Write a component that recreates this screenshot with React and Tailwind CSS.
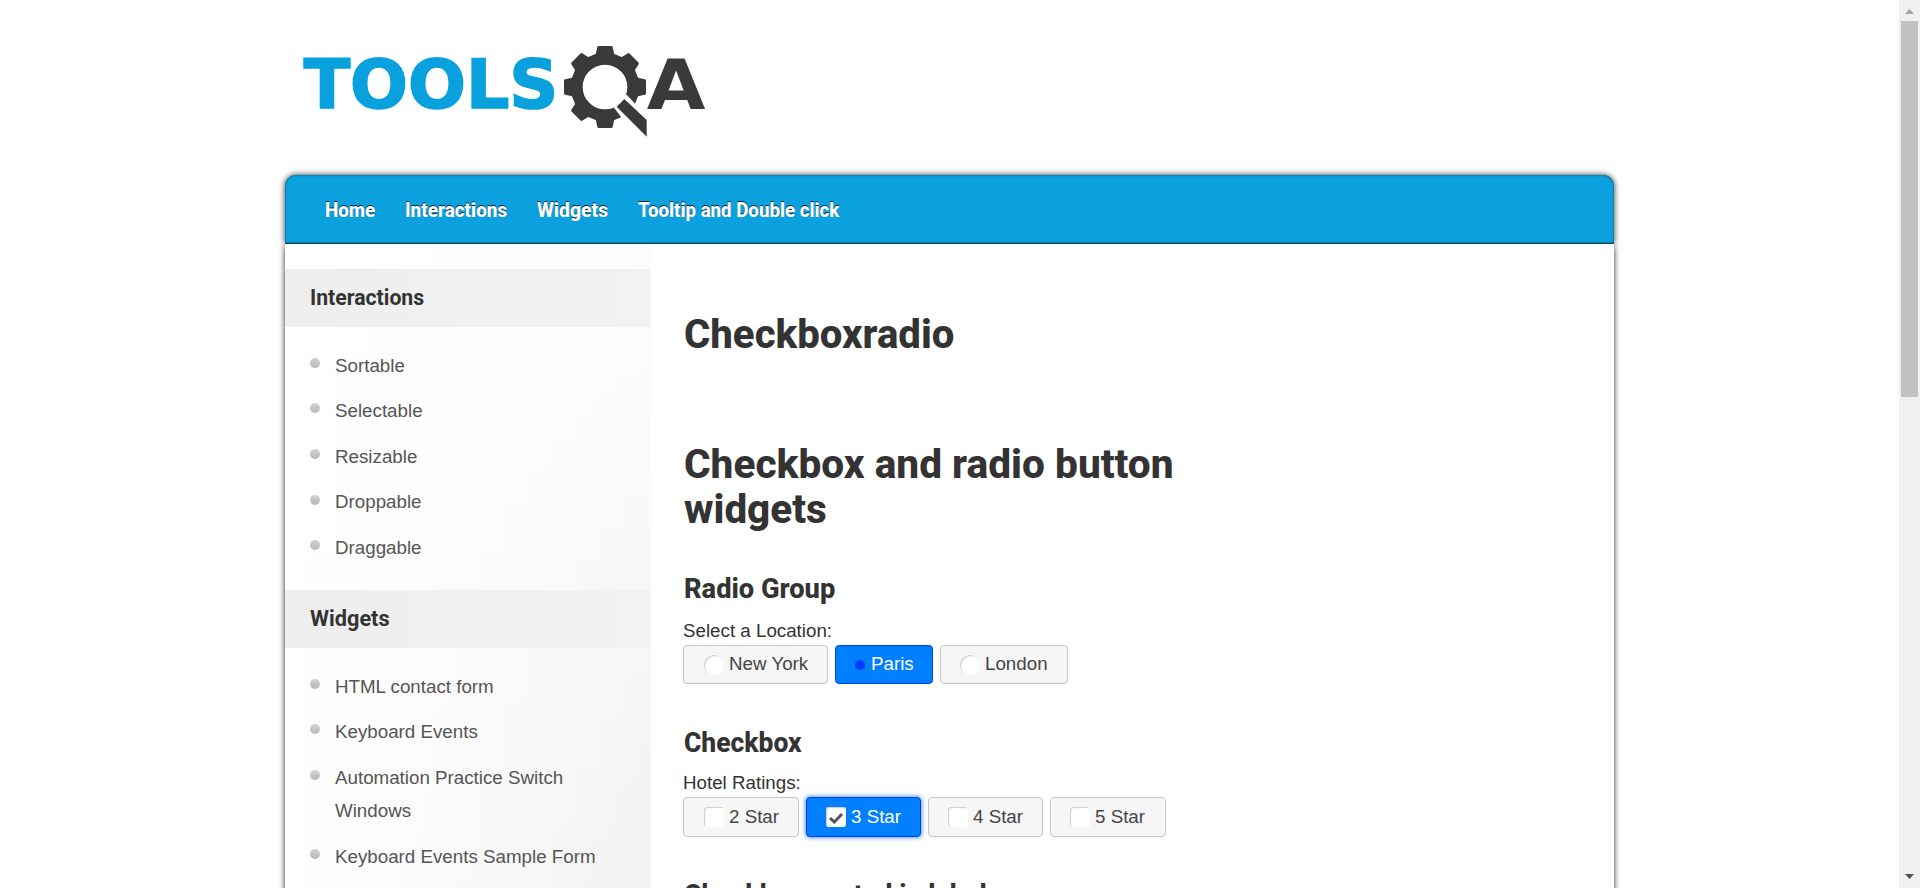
import React from "react";

const navItems = [
  { label: "Home", pos: "w-[80px]", fit: "scale-x-[0.94]" },
  { label: "Interactions", pos: "w-[132px]", fit: "scale-x-[0.945]" },
  { label: "Widgets", pos: "w-[101px]", fit: "scale-x-[0.967]" },
  { label: "Tooltip and Double click", pos: "w-[220px]", fit: "scale-x-[0.934]" },
];

function Fit({ className, children }) {
  return <span className={`inline-block origin-left whitespace-nowrap ${className}`}>{children}</span>;
}

function Logo() {
  return (
    <svg className="block h-[120px] w-[450px]" viewBox="0 0 1350 360" aria-label="ToolsQA">
      <text x="71" y="234" fill="#08a1de" stroke="#08a1de" strokeWidth="5" fontFamily="DejaVu Sans" fontWeight="700" fontSize="201" textLength="764" lengthAdjust="spacingAndGlyphs">TOOLS</text>
      <g transform="translate(975 171)" fill="#3a3a3a" stroke="#3a3a3a" strokeLinejoin="round">
        <circle r="83" fill="none" strokeWidth="32" />
        {[0, 45, 90, 135, 180, 225, 270, 315].map((a) => (
          <path key={a} transform={`rotate(${a})`} d="M-19 -119H19L24 -97L38 -90L34 -76H-34L-38 -90L-24 -97Z" strokeWidth="8" />
        ))}
      </g>
      <path d="M1037 191L1064 220L1120 262V330H1060L1021 258L1002 233Z" fill="#fff" />
      <path d="M1033 207L1100 270V320L1010 230Z" fill="#3a3a3a" />
      <text x="1100" y="236" fill="#3a3a3a" fontFamily="DejaVu Sans" fontWeight="700" fontSize="207" textLength="176" lengthAdjust="spacingAndGlyphs">A</text>
    </svg>
  );
}

function SideSection({ title, fit, items }) {
  return (
    <section>
      <h3 className="flex h-[58px] items-center bg-linear-to-r from-[#eeeeee] to-[#f2f2f2] pl-[25px] font-[Roboto] text-[21.5px] font-bold text-[#333]">
        <Fit className={fit}>{title}</Fit>
      </h3>
      <ul className="flex flex-col gap-[12.5px] pt-[21.5px] pb-[25.9px]">
        {items.map((t) => (
          <li key={t} className="flex gap-[15px] pr-10 pl-[25px] text-[18.75px] leading-[33.125px] text-[#555]">
            <span className="mt-[9.3px] size-[10px] shrink-0 rounded-full bg-linear-to-b from-[#d2d2d2] to-[#b8b8b8]" />
            <span>{t}</span>
          </li>
        ))}
      </ul>
    </section>
  );
}

function Choice({ label, type, checked, className }) {
  const tone = checked ? "border-[#003eff] bg-[#007fff] text-white" : "border-[#c5c5c5] bg-[#f6f6f6] text-[#454545]";
  return (
    <label className={`flex items-center rounded-[4px] border text-[18.75px] leading-none ${tone} ${className}`}>
      {type === "radio" && checked && <span className="mr-[6px] size-[10px] rounded-full bg-[#003eff]" />}
      {type === "radio" && !checked && (
        <span className="mr-[5px] size-5 rounded-full bg-white shadow-[inset_1px_1px_1px_#ccc]" />
      )}
      {type === "checkbox" && (
        <span className="mr-[5px] flex size-5 items-center justify-center rounded-[3px] bg-white shadow-[inset_1px_1px_1px_#ccc]">
          {checked && (
            <svg viewBox="0 0 20 20" className="size-5">
              <path d="M4 11L8.3 15L16 7" fill="none" stroke="#555" strokeWidth="3" />
            </svg>
          )}
        </span>
      )}
      <span>{label}</span>
    </label>
  );
}

function SubHeading({ fit, className, children }) {
  return (
    <h2 className={`h-[34px] pl-px font-[Roboto] text-[27.7px] leading-[35px] font-extrabold text-[#333] ${className}`}>
      <Fit className={fit}>{children}</Fit>
    </h2>
  );
}

export default function App() {
  return (
    <div className="flex h-[888px] w-full overflow-hidden bg-white font-['Liberation_Sans',Arial,sans-serif]">
      <div className="min-w-0 flex-1 overflow-hidden pl-[285px]">
        <header className="-ml-[5px] h-[175px] pt-[30px]">
          <Logo />
        </header>
        <div className="w-[1329px]">
          <nav className="flex h-[69px] items-center rounded-t-[11px] border-b border-[#1c3c50] bg-[#0aa1de] pt-px pl-[40px] font-[Roboto] text-[20px] font-extrabold text-white shadow-[0_0_6px_#333,inset_0_0_2px_#034] [text-shadow:0_-1px_0_#023]">
            {navItems.map((n) => (
              <a key={n.label} className={n.pos}>
                <Fit className={n.fit}>{n.label}</Fit>
              </a>
            ))}
          </nav>
          <div className="flex h-[1800px] bg-white shadow-[0_3px_6px_#222] [clip-path:inset(0_-10px_0_-10px)]">
            <aside className="w-[366px] bg-[linear-gradient(to_bottom,rgba(255,255,255,0.9),rgba(255,255,255,0)_700px),linear-gradient(to_right,#fff,#fbfbfb_35%,#f1f1f1)] pt-[25px]">
              <SideSection title="Interactions" fit="scale-x-[0.987]" items={["Sortable", "Selectable", "Resizable", "Droppable", "Draggable"]} />
              <SideSection
                title="Widgets"
                fit="scale-x-[1.01]"
                items={["HTML contact form", "Keyboard Events", "Automation Practice Switch Windows", "Keyboard Events Sample Form"]}
              />
            </aside>
            <main className="pt-[67px] pl-[32px] text-[#333]">
              <h1 className="h-[45px] pl-px font-[Roboto] text-[41px] leading-[46px] font-extrabold">
                <Fit className="scale-x-[0.979]">Checkboxradio</Fit>
              </h1>
              <h1 className="mt-[85px] flex h-[90px] flex-col pt-[0.5px] pl-px font-[Roboto] text-[41px] leading-[45px] font-extrabold">
                <Fit className="scale-x-[0.99]">Checkbox and radio button</Fit>
                <Fit className="scale-x-[0.985]">widgets</Fit>
              </h1>
              <SubHeading className="mt-[40px]" fit="scale-x-[0.984]">Radio Group</SubHeading>
              <p className="mt-[12px] h-[28px] text-[18.75px] leading-[28px]">Select a Location:</p>
              <div className="flex h-[39px] gap-[7px]">
                <Choice type="radio" label="New York" className="w-[145px] pl-5" />
                <Choice type="radio" label="Paris" checked className="w-[98px] pl-[19px]" />
                <Choice type="radio" label="London" className="w-[128px] pl-[19px]" />
              </div>
              <SubHeading className="mt-[40.5px]" fit="scale-x-[0.955]">Checkbox</SubHeading>
              <p className="mt-[10px] h-[28px] text-[18.75px] leading-[28px]">Hotel Ratings:</p>
              <div className="mt-[0.5px] flex h-[40px] gap-[7px]">
                <Choice type="checkbox" label="2 Star" className="w-[116px] pl-5" />
                <Choice type="checkbox" label="3 Star" checked className="w-[115px] pl-[19px] shadow-[0_0_4px_1px_#5e9ed6]" />
                <Choice type="checkbox" label="4 Star" className="w-[115px] pl-[19px]" />
                <Choice type="checkbox" label="5 Star" className="w-[116px] pl-[19px]" />
              </div>
              <SubHeading className="mt-[39.5px]" fit="scale-x-[0.97]">Checkbox nested in label</SubHeading>
            </main>
          </div>
        </div>
      </div>
      <div className="flex w-[21px] shrink-0 flex-col items-center bg-[#f0f0f0]">
        <svg viewBox="0 0 21 21" className="size-[21px] shrink-0"><path d="M6 14L10.5 9L15 14Z" fill="#a3a3a3" /></svg>
        <div className="h-[376px] w-[17px] bg-[#c1c1c1]" />
        <div className="flex-1" />
        <svg viewBox="0 0 21 21" className="size-[21px] shrink-0"><path d="M6 7L10.5 12L15 7Z" fill="#505050" /></svg>
      </div>
    </div>
  );
}
